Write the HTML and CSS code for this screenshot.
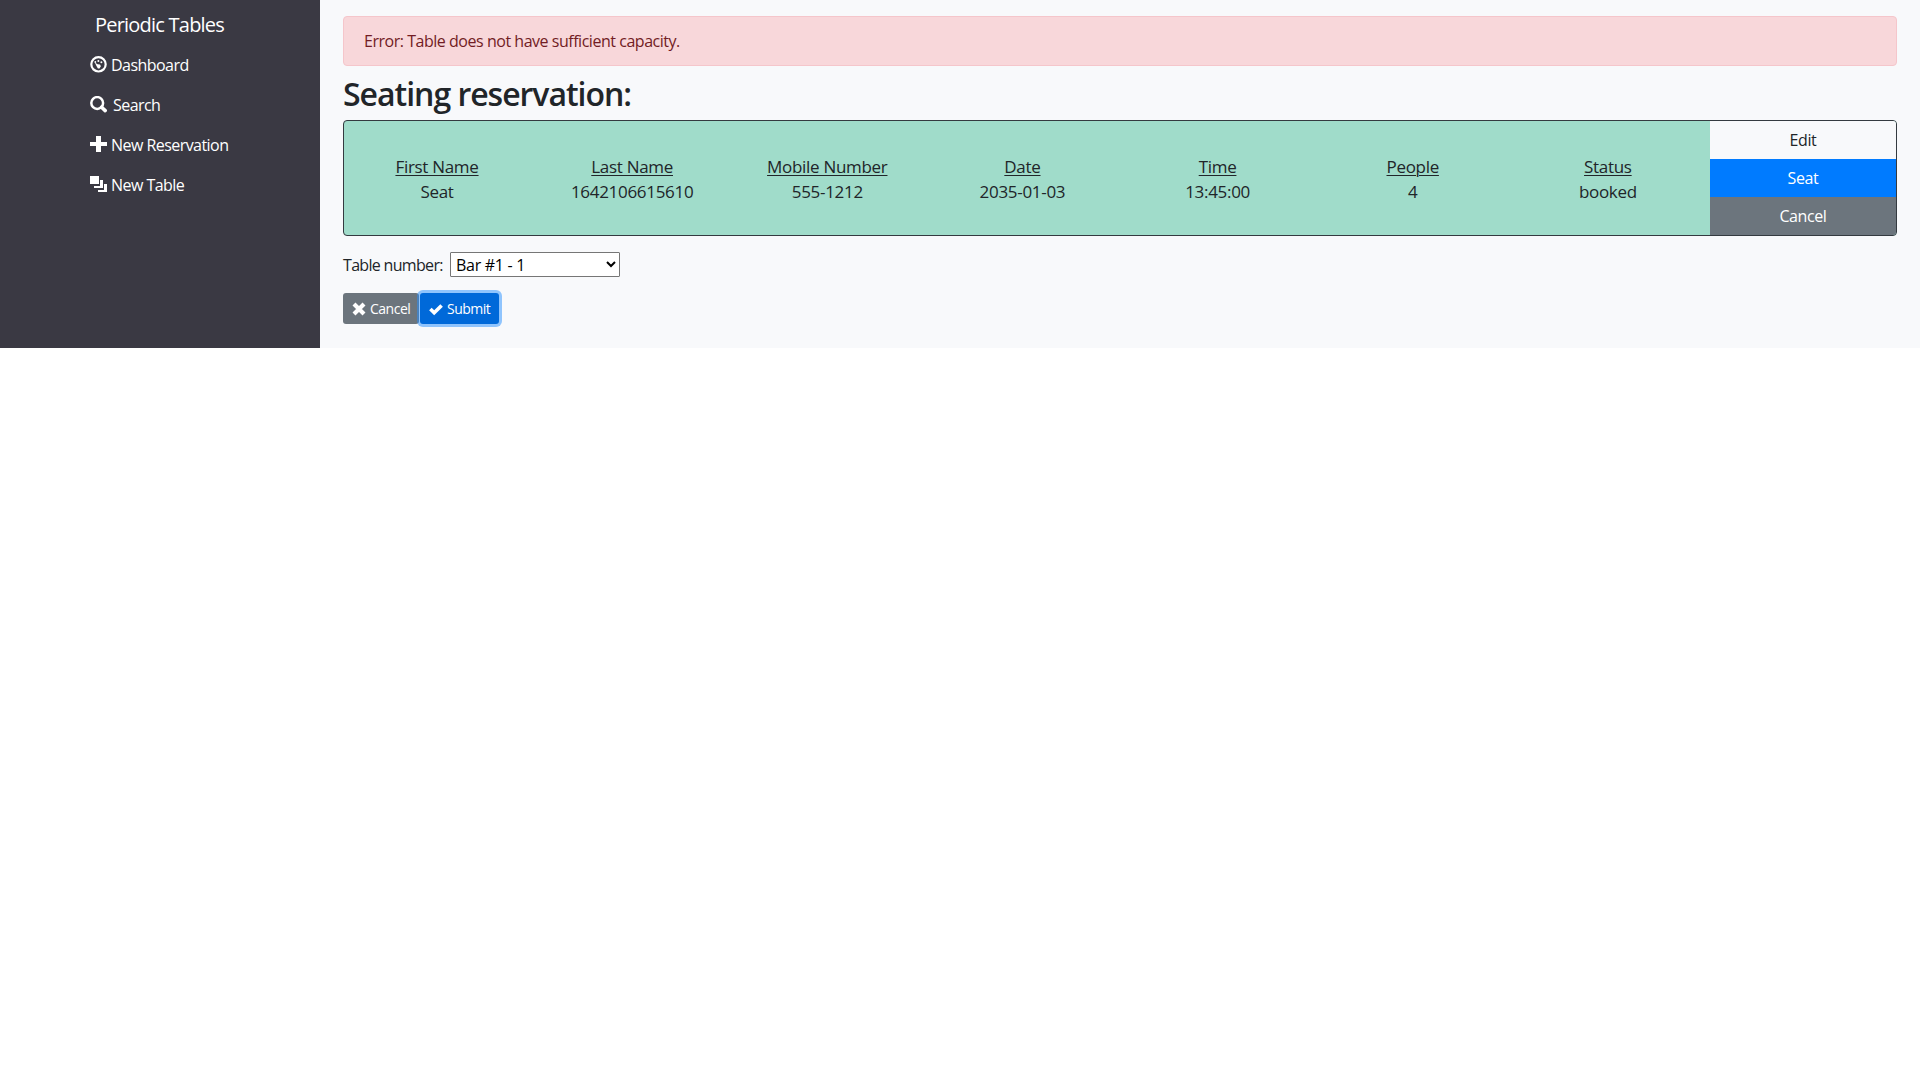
FILE: index.html
```html
<!DOCTYPE html>
<html lang="en">
<head>
<meta charset="utf-8">
<title>Periodic Tables</title>
<link rel="stylesheet" href="styles.css">
</head>
<body>
<div class="app">
  <nav class="sidebar">
    <a class="brand">Periodic Tables</a>
    <a class="link"><svg class="icon" viewBox="0 0 17 17"><circle cx="8.5" cy="8.3" r="7.2" fill="none" stroke="#fff" stroke-width="2.2"/><path d="M4.8 6.4 7.6 8.2 10 8.4l.9 1.8-1.4 2.2H7.9L6.6 10.2z" fill="#fff"/><circle cx="8.4" cy="5" r="1" fill="#fff"/><circle cx="11.4" cy="6.2" r="1" fill="#fff"/><circle cx="5.3" cy="6" r=".9" fill="#fff"/></svg><span>Dashboard</span></a>
    <a class="link link-search"><svg class="icon" viewBox="0 0 17 17"><circle cx="7.2" cy="7" r="5.9" fill="none" stroke="#fff" stroke-width="2.5"/><path d="m11.6 11.2 3.6 3.4" stroke="#fff" stroke-width="3.6" stroke-linecap="round"/></svg><span>Search</span></a>
    <a class="link"><svg class="icon" viewBox="0 0 17 17"><path d="M6 0h5v6h6v4h-6v6H6v-6H0V6h6z" fill="#fff"/></svg><span>New Reservation</span></a>
    <a class="link"><svg class="icon" viewBox="0 0 17 17"><path d="M0 0h9v8H0zM10 4h3v8H4v-2h6zM14 8h3v8H8v-2h6z" fill="#fff"/></svg><span>New Table</span></a>
  </nav>
  <main class="main">
    <div class="alert">Error: Table does not have sufficient capacity.</div>
    <h2 class="heading">Seating reservation:</h2>
    <section class="card">
      <dl class="field"><dt>First Name</dt><dd>Seat</dd></dl>
      <dl class="field"><dt>Last Name</dt><dd>1642106615610</dd></dl>
      <dl class="field"><dt>Mobile Number</dt><dd>555-1212</dd></dl>
      <dl class="field"><dt>Date</dt><dd>2035-01-03</dd></dl>
      <dl class="field"><dt>Time</dt><dd>13:45:00</dd></dl>
      <dl class="field"><dt>People</dt><dd>4</dd></dl>
      <dl class="field"><dt>Status</dt><dd>booked</dd></dl>
      <div class="actions">
        <a class="action light">Edit</a>
        <a class="action primary">Seat</a>
        <a class="action secondary">Cancel</a>
      </div>
    </section>
    <form class="form">
      <div class="row">
        <label for="table">Table number:</label>
        <select id="table" class="select"><option>Bar #1 - 1</option></select>
      </div>
      <div class="buttons">
        <button type="button" class="btn btn-cancel"><svg class="glyph" viewBox="0 0 14 14"><path d="m2 2 10 10M12 2 2 12" stroke="#fff" stroke-width="4.2"/></svg><span>Cancel</span></button>
        <button type="button" class="btn btn-submit"><svg class="glyph" viewBox="0 0 14 14"><path d="m1.4 7 3.8 3.8 7.4-7.3" fill="none" stroke="#fff" stroke-width="3.6"/></svg><span>Submit</span></button>
      </div>
    </form>
  </main>
</div>
</body>
</html>
```
FILE: styles.css
```css
* { box-sizing: border-box; }
body {
  margin: 0;
  background: #fff;
  color: #212529;
  font: 16px/24px "Segoe UI", "Open Sans", sans-serif;
}
.app { display: flex; height: 348px; }
.sidebar {
  width: 320px;
  padding: 5px 0 0 90px;
  background: #3a3943;
  color: #fff;
  display: flex;
  flex-direction: column;
}
.brand { height: 40px; padding-left: 5px; font-size: 20px; line-height: 40px; letter-spacing: -0.78px; }
.link { display: flex; align-items: center; gap: 4px; height: 40px; letter-spacing: -0.55px; }
.link-search { gap: 6px; }
.icon { width: 17px; height: 17px; margin-top: -2px; flex: none; }
.main { flex: 1; padding: 16px 23px 0; background: #f8f9fb; }
.alert {
  height: 50px;
  padding: 12px 20px;
  border: 1px solid #f5c6cb;
  border-radius: 4px;
  background: #f8d7da;
  color: #721c24;
  letter-spacing: -0.47px;
}
.heading { margin: 9px 0 7px; font-size: 32px; font-weight: 600; line-height: 38px; letter-spacing: -1.02px; }
.card {
  display: flex;
  justify-content: space-between;
  height: 116px;
  border: 1px solid #343a40;
  border-radius: 4px;
  background: #a0dcca;
  overflow: hidden;
}
.field { width: 186px; margin: 0; padding-top: 33px; text-align: center; line-height: 25px; font-size: 17px; letter-spacing: -0.3px; }
.field dt { text-decoration: underline; text-underline-offset: 2px; text-decoration-thickness: 1px; }
.field dd { margin: 0; }
.actions { width: 186px; display: flex; flex-direction: column; }
.action { height: 38px; line-height: 38px; text-align: center; letter-spacing: -0.4px; }
.light { background: #f8f9fb; }
.primary { background: #007bff; color: #fff; }
.secondary { background: #6c757d; color: #fff; }
.row { display: flex; align-items: center; gap: 7px; margin-top: 16px; height: 25px; }
.row label { width: 100px; padding-top: 1px; white-space: nowrap; letter-spacing: -0.68px; }
.select {
  width: 170px;
  height: 25px;
  border: 1px solid #767676;
  border-radius: 1px;
  background: #fff;
  color: #000;
  padding: 0 0 0 1px;
  font: 16px "Segoe UI", "Open Sans", sans-serif;
  letter-spacing: -0.3px;
}
.buttons { display: flex; gap: 1px; margin-top: 16px; }
.btn {
  display: flex;
  align-items: center;
  gap: 4px;
  height: 31px;
  padding: 0 0 0 9px;
  border: 0;
  border-radius: 3px;
  color: #fff;
  font: 14px "Segoe UI", "Open Sans", sans-serif;
  letter-spacing: -0.5px;
}
.btn-cancel { width: 76px; background: #6c757d; }
.btn-submit { width: 79px; background: #0069d9; box-shadow: 0 0 0 3px rgba(38, 143, 255, .5); }
.glyph { width: 14px; height: 14px; flex: none; }
```
